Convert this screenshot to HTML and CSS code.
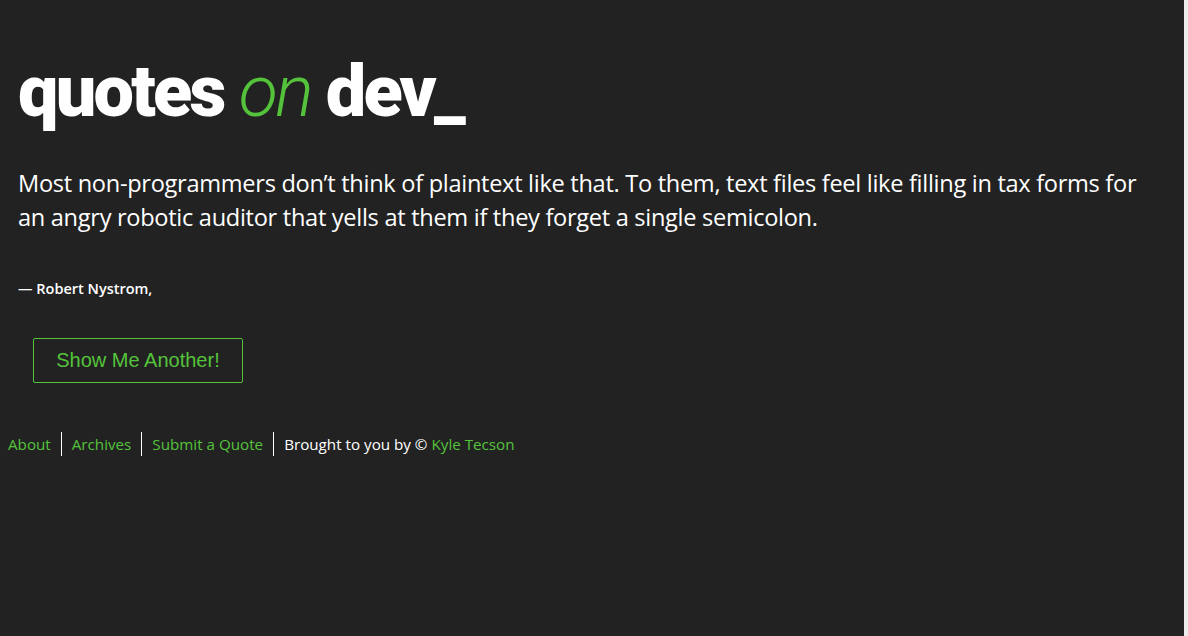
FILE: index.html
```html
<!DOCTYPE html>
<html lang="en">
<head>
<meta charset="utf-8">
<title>Quotes on Dev</title>
<link rel="stylesheet" href="styles.css">
</head>
<body>
<div class="page">
  <header class="site-header">
    <h1 class="site-title">quotes <span class="on">on</span> dev_</h1>
  </header>
  <main class="main">
    <blockquote class="quote">
      <p class="quote-text">Most non-programmers don’t think of plaintext like that. To them, text files feel like filling in tax forms for an angry robotic auditor that yells at them if they forget a single semicolon.</p>
      <p class="quote-author">— Robert Nystrom,</p>
    </blockquote>
    <div class="actions">
      <button class="another" type="button">Show Me Another!</button>
    </div>
  </main>
  <footer class="site-footer">
    <nav class="footer-nav">
      <a href="#" class="fl">About</a>
      <a href="#" class="fl">Archives</a>
      <a href="#" class="fl">Submit a Quote</a>
      <span class="credit">Brought to you by © <a href="#">Kyle Tecson</a></span>
    </nav>
  </footer>
</div>
</body>
</html>
```
FILE: styles.css
```css
html {
  background: #ececec;
}
body {
  margin: 0;
  font-family: "Open Sans", "Liberation Sans", sans-serif;
  color: #ffffff;
}
.page {
  width: 1184px;
  min-height: 636px;
  background: #222222;
  padding: 0 8px;
  box-sizing: border-box;
}
.site-header {
  padding: 47px 10px 0;
}
.site-title {
  margin: 0;
  font-family: Roboto, "Open Sans", sans-serif;
  font-weight: 900;
  font-size: 72px;
  line-height: 90px;
  letter-spacing: -2.8px;
}
.on {
  color: #55c23b;
  font-style: italic;
  font-weight: 300;
}
.main {
  padding: 0 10px;
}
.quote {
  margin: 0;
}
.quote-text {
  margin: 29px 0 0;
  font-size: 23.6px;
  line-height: 34px;
  letter-spacing: -0.3px;
}
.quote-author {
  margin: 45px 0 0;
  font-size: 14.5px;
  font-weight: 600;
  line-height: 20px;
}
.actions {
  padding: 39px 15px 0;
}
.another {
  background: transparent;
  border: 1px solid #55c23b;
  border-radius: 2px;
  color: #55c23b;
  font-family: "Liberation Sans", Arial, sans-serif;
  font-size: 20px;
  width: 210px;
  height: 45px;
  padding: 0;
  cursor: pointer;
}
.site-footer {
  padding-top: 49px;
}
.footer-nav {
  display: flex;
  align-items: center;
  font-size: 15.2px;
  line-height: 24px;
}
.footer-nav a {
  color: #55c23b;
  text-decoration: none;
}
.fl {
  padding-right: 10px;
  margin-right: 10px;
  border-right: 1px solid #ffffff;
}
.credit {
  color: #ffffff;
}
```
